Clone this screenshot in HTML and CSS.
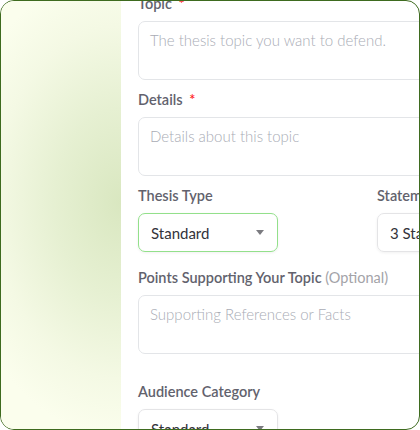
FILE: index.html
```html
<!DOCTYPE html>
<html lang="en">
<head>
    <meta charset="UTF-8">
    <meta name="viewport" content="width=device-width, initial-scale=1.0">
    <title>Thesis Defense</title>
    <link rel="stylesheet" href="styles.css">
</head>
<body>
    <div class="frame">
        <aside class="side"></aside>
        <main class="panel">
            <form class="form">
                <div class="form-field">
                    <label for="topic">Topic <span class="req">*</span></label>
                    <textarea id="topic" placeholder="The thesis topic you want to defend."></textarea>
                </div>
                <div class="form-field">
                    <label for="details">Details <span class="req">*</span></label>
                    <textarea id="details" placeholder="Details about this topic"></textarea>
                </div>
                <div class="form-row">
                    <div class="form-field">
                        <label>Thesis Type</label>
                        <div class="select active">
                            <span>Standard</span>
                            <span class="caret"></span>
                        </div>
                    </div>
                    <div class="form-field">
                        <label>Statements</label>
                        <div class="select">
                            <span>3 Statements</span>
                            <span class="caret"></span>
                        </div>
                    </div>
                </div>
                <div class="form-field">
                    <label for="points">Points Supporting Your Topic <span class="optional">(Optional)</span></label>
                    <textarea id="points" placeholder="Supporting References or Facts"></textarea>
                </div>
                <div class="form-field spaced">
                    <label>Audience Category</label>
                    <div class="select">
                        <span>Standard</span>
                        <span class="caret"></span>
                    </div>
                </div>
            </form>
        </main>
    </div>
</body>
</html>
```

FILE: styles.css
```css
*{
    box-sizing: border-box;
    margin: 0;
    padding: 0;
}
body{
    font-family: "Lato", "Open Sans", sans-serif;
    background-color: white;
}
.frame{
    width: 420px;
    height: 430px;
    border: 1px solid #3e6b1f;
    border-radius: 14px;
    overflow: hidden;
    display: flex;
    background-color: white;
}
.side{
    width: 120px;
    flex-shrink: 0;
    background: radial-gradient(ellipse 140% 55% at 100% 47%, #d9e7c0 0%, #e6f0d2 40%, #f4f9e4 75%, #fbfeed 100%);
}
.panel{
    flex: 1;
    overflow: hidden;
    padding-left: 17px;
}
.form{
    width: 520px;
    margin-top: -7px;
}
.form-field{
    margin-bottom: 10px;
}
.form-field label{
    display: block;
    height: 20px;
    line-height: 20px;
    margin-bottom: 7px;
    font-size: 14.5px;
    font-weight: 600;
    color: #62626d;
}
.req{
    color: #ff1f1f;
    margin-left: 3px;
}
.optional{
    font-weight: 400;
    color: #a3a3a8;
}
textarea{
    display: block;
    width: 100%;
    height: 59px;
    border: 1px solid #e3e5e8;
    border-radius: 7px;
    padding: 9px 11px;
    font-family: inherit;
    font-size: 15px;
    line-height: 18px;
    resize: none;
    outline: none;
}
textarea::placeholder{
    color: #a9acb5;
    font-weight: 300;
}
.form-row{
    display: grid;
    grid-template-columns: 239px 239px;
    margin-bottom: 6px;
}
.select{
    width: 140px;
    height: 39px;
    border: 1px solid #e4e4e6;
    border-radius: 7px;
    padding: 0 13px 0 12px;
    display: flex;
    align-items: center;
    justify-content: space-between;
    font-size: 15px;
    color: #33333a;
    box-shadow: 0 1px 3px rgba(0, 0, 0, 0.06);
    white-space: nowrap;
}
.select.active{
    border-color: #93e08b;
}
.caret{
    width: 0;
    height: 0;
    border-left: 4px solid transparent;
    border-right: 4px solid transparent;
    border-top: 5px solid #7b7b80;
}
.spaced{
    margin-top: 28px;
}
```
